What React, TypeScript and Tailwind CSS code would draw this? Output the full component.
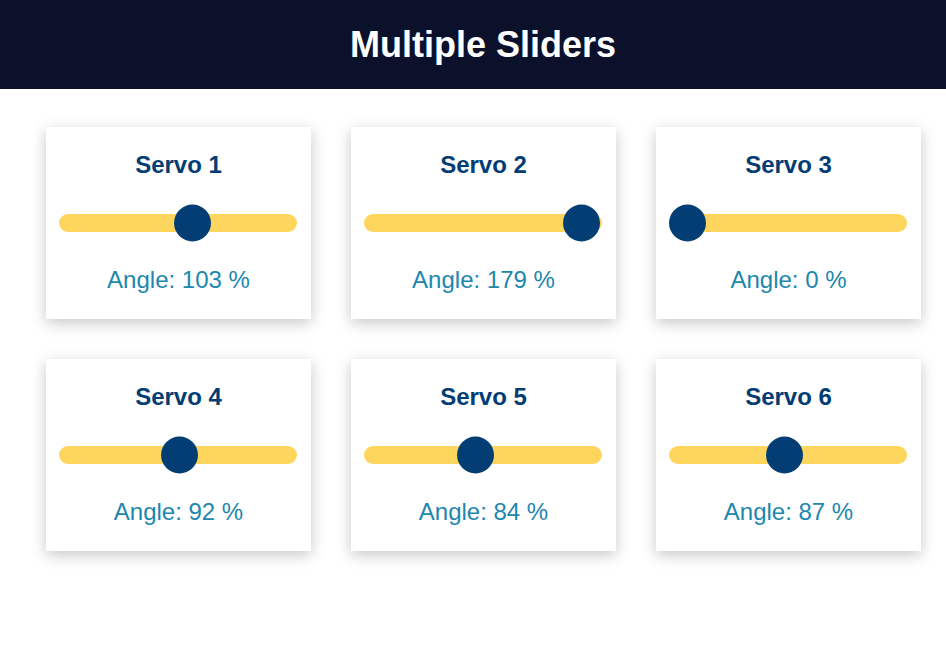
import React from 'react';

const servos = [
  { name: 'Servo 1', angle: 103 },
  { name: 'Servo 2', angle: 179 },
  { name: 'Servo 3', angle: 0 },
  { name: 'Servo 4', angle: 92 },
  { name: 'Servo 5', angle: 84 },
  { name: 'Servo 6', angle: 87 },
];

const Slider: React.FC<{ value: number }> = ({ value }) => {
  // track is 238px wide, thumb 37px
  const left = ((238 - 37) * value) / 180;
  return (
    <div className="relative h-[18px] w-[238px] rounded-full bg-[#fed65e]">
      <div
        className="absolute top-1/2 h-[37px] w-[37px] -translate-y-1/2 rounded-full bg-[#023e74]"
        style={{ left: `${left}px` }}
      ></div>
    </div>
  );
};

const App: React.FC = () => {
  return (
    <div className="min-h-screen bg-white font-['Liberation_Sans',Arial,sans-serif]">
      <header className="flex h-[89px] items-center justify-center bg-[#0b112a] pl-5">
        <h1 className="text-4xl font-bold text-white">Multiple Sliders</h1>
      </header>

      <div className="grid grid-cols-[265px_265px_265px] gap-10 pl-[46px] pt-[38px]">
        {servos.map((servo, index) => (
          <div
            key={index}
            className="flex h-[192px] flex-col items-center bg-white pt-[23px] shadow-[0_4px_14px_rgba(0,0,0,0.22)]"
          >
            <h2 className="text-2xl leading-[30px] font-bold text-[#033d73]">{servo.name}</h2>
            <div className="mt-[34px] pr-[2px]">
              <Slider value={servo.angle} />
            </div>
            <p className="mt-[32px] text-2xl text-[#1d87ad]">Angle: {servo.angle} %</p>
          </div>
        ))}
      </div>
    </div>
  );
};

export default App;
